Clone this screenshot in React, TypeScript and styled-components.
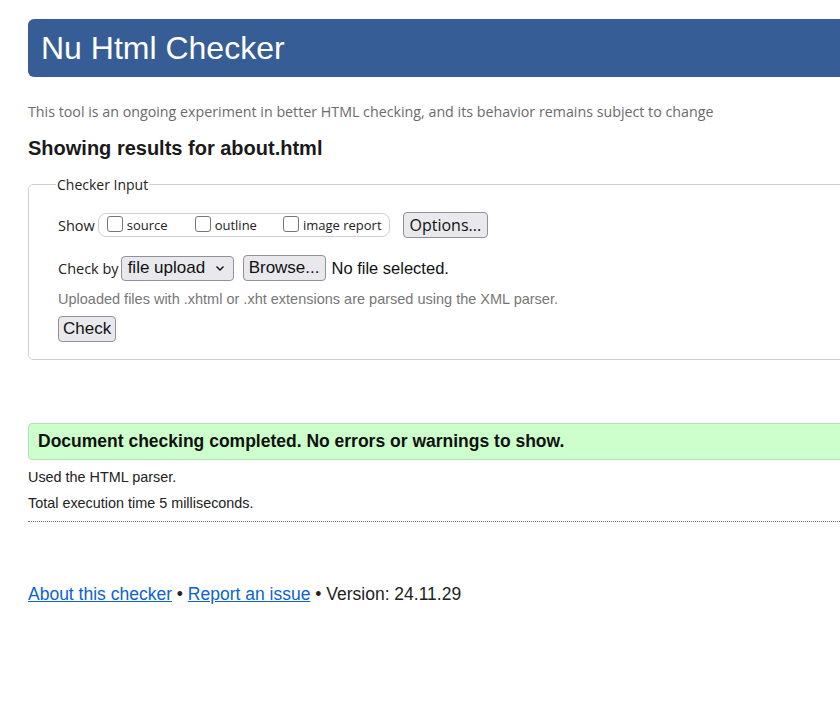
import React from "react";
import styled, { createGlobalStyle } from "styled-components";

const Global = createGlobalStyle`
  html, body { margin: 0; padding: 0; overflow: hidden; background: #fff; }
  body { font-family: "Liberation Sans", Arial, sans-serif; color: #111; }
`;

const Page = styled.div`
  width: 900px;
  padding: 19px 0 40px 28px;
  display: flex;
  flex-direction: column;
`;

const Header = styled.h1`
  margin: 0;
  height: 58px;
  background: #365d95;
  border-radius: 6px;
  color: #fff;
  font: 400 32px "Liberation Sans", Arial, sans-serif;
  display: flex;
  align-items: center;
  padding-left: 13px;
`;

const Intro = styled.p`
  margin: 25px 0 0;
  font: 400 14.25px "Open Sans", "Noto Sans", sans-serif;
  color: #6b6b6b;
  line-height: 20px;
`;

const Title = styled.h2`
  margin: 14px 0 0;
  font: 700 20px "Liberation Sans", Arial, sans-serif;
  color: #1a1a1a;
  line-height: 24px;
`;

const Fieldset = styled.fieldset`
  margin: 15px 0 0;
  border: 1px solid #cfcfcf;
  border-radius: 5px;
  padding: 10px 29px 17px;
  min-inline-size: auto;
`;

const Legend = styled.legend`
  margin-left: -2px;
  padding: 0 1px;
  font: 400 14px "Open Sans", "Noto Sans", sans-serif;
  color: #222;
`;

const Row = styled.div<{ $mt?: number }>`
  display: flex;
  align-items: center;
  margin-top: ${(p) => p.$mt ?? 0}px;
`;

const Label = styled.span<{ $mr?: number }>`
  font: 400 14.5px "Open Sans", "Noto Sans", sans-serif;
  color: #222;
  margin-right: ${(p) => p.$mr ?? 3}px;
`;

const Pill = styled.div`
  display: flex;
  align-items: center;
  height: 22px;
  border: 1px solid #cfcfcf;
  border-radius: 8px;
  padding: 0 7px 0 8px;
`;

const Opt = styled.label<{ $mr?: number }>`
  display: flex;
  align-items: center;
  font: 400 13px "Open Sans", "Noto Sans", sans-serif;
  color: #222;
  margin-right: ${(p) => p.$mr ?? 0}px;
`;

const Box = styled.span`
  width: 16px;
  height: 16px;
  border: 1.5px solid #77767d;
  border-radius: 3px;
  margin-right: 4px;
  box-sizing: border-box;
  margin-top: -3px;
`;

const Button = styled.button<{ $ml?: number }>`
  height: 26px;
  padding: 0 6px;
  border: 1px solid #8f8f9d;
  border-radius: 4px;
  background: #e9e9ed;
  font: 400 16px "Open Sans", "Noto Sans", sans-serif;
  color: #111;
  margin-left: ${(p) => p.$ml ?? 0}px;
  display: inline-flex;
  align-items: center;
  justify-content: center;
`;

const ArialButton = styled(Button)`
  font-family: "Liberation Sans", Arial, sans-serif;
  font-size: 17px;
  padding: 0 5px;
`;

const SmallButton = styled(ArialButton)`
  padding: 0 4px;
`;

const Select = styled.div`
  height: 25px;
  width: 113px;
  box-sizing: border-box;
  border: 1px solid #8f8f9d;
  border-radius: 4px;
  background: #e9e9ed;
  display: flex;
  align-items: center;
  justify-content: space-between;
  padding: 0 8px 0 6px;
  font: 400 17px "Liberation Sans", Arial, sans-serif;
  color: #111;
`;

const FileText = styled.span`
  margin-left: 6px;
  font: 400 16.5px "Liberation Sans", Arial, sans-serif;
  color: #111;
`;

const Note = styled.p`
  margin: 10px 0 0;
  font: 400 14.5px "Liberation Sans", Arial, sans-serif;
  color: #777;
`;

const Success = styled.div`
  margin-top: 63px;
  height: 37px;
  box-sizing: border-box;
  background: #ccffcc;
  border: 1px solid #b4e0b4;
  border-radius: 4px;
  padding-left: 9px;
  display: flex;
  align-items: center;
  font: 700 17.5px "Liberation Sans", Arial, sans-serif;
  color: #111;
`;

const Info = styled.p<{ $mt: number }>`
  margin: ${(p) => p.$mt}px 0 0;
  font: 400 14.4px "Liberation Sans", Arial, sans-serif;
  color: #222;
  line-height: 18px;
`;

const Rule = styled.hr`
  margin: 9px 0 0;
  border: 0;
  border-top: 1px dotted #777;
  height: 0;
`;

const Footer = styled.p`
  margin: 62px 0 0;
  font: 400 17.5px "Liberation Sans", Arial, sans-serif;
  color: #222;
`;

const Link = styled.a`
  color: #0b63ce;
  text-decoration: underline;
`;

const Chevron = () => (
  <svg width="10" height="7" viewBox="0 0 10 7">
    <path d="M1.5 1.5 L5 5 L8.5 1.5" fill="none" stroke="#111" strokeWidth="1.4" />
  </svg>
);

export default function App() {
  return (
    <>
      <Global />
      <Page>
        <Header>Nu Html Checker</Header>
        <Intro>
          This tool is an ongoing experiment in better HTML checking, and its behavior remains subject to change
        </Intro>
        <Title>Showing results for about.html</Title>
        <Fieldset>
          <Legend>Checker Input</Legend>
          <Row $mt={8}>
            <Label>Show</Label>
            <Pill>
              <Opt $mr={27}>
                <Box />
                source
              </Opt>
              <Opt $mr={26}>
                <Box />
                outline
              </Opt>
              <Opt>
                <Box />
                image report
              </Opt>
            </Pill>
            <Button $ml={13}>Options...</Button>
          </Row>
          <Row $mt={17}>
            <Label $mr={2}>Check by</Label>
            <Select>
              <span>file upload</span>
              <Chevron />
            </Select>
            <ArialButton $ml={9}>Browse...</ArialButton>
            <FileText>No file selected.</FileText>
          </Row>
          <Note>Uploaded files with .xhtml or .xht extensions are parsed using the XML parser.</Note>
          <Row $mt={9}>
            <SmallButton>Check</SmallButton>
          </Row>
        </Fieldset>
        <Success>Document checking completed. No errors or warnings to show.</Success>
        <Info $mt={8}>Used the HTML parser.</Info>
        <Info $mt={8}>Total execution time 5 milliseconds.</Info>
        <Rule />
        <Footer>
          <Link href="#">About this checker</Link> • <Link href="#">Report an issue</Link> • Version: 24.11.29
        </Footer>
      </Page>
    </>
  );
}
